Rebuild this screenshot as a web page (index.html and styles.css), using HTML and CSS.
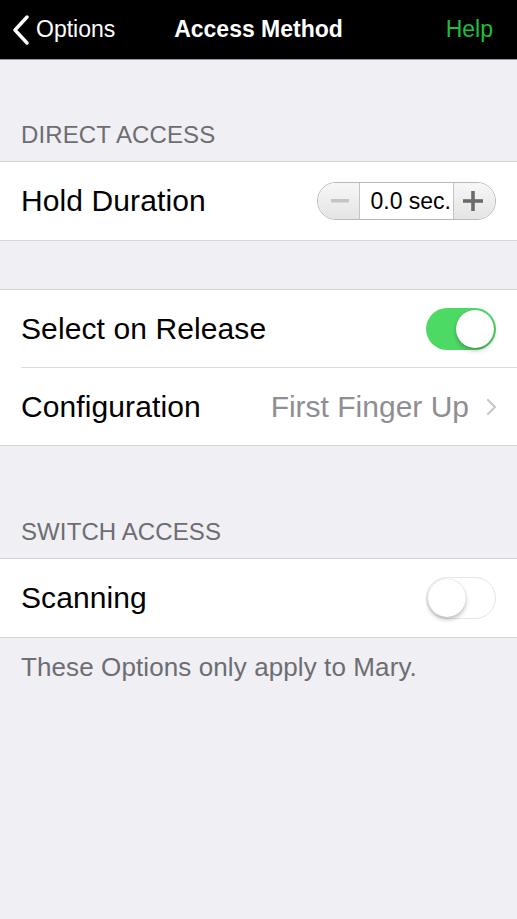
FILE: index.html
```html
<!DOCTYPE html>
<html>
<head>
<meta charset="utf-8">
<title>Access Method</title>
<link rel="stylesheet" href="styles.css">
</head>
<body>
<div class="screen">
  <header class="navbar">
    <div class="nav-left">
      <svg class="back-chevron" width="18" height="30" viewBox="0 0 18 30"><path d="M15 2 L3 15 L15 28" fill="none" stroke="#fff" stroke-width="3.4" stroke-linecap="round" stroke-linejoin="round"/></svg>
      <span class="nav-back">Options</span>
    </div>
    <div class="nav-title">Access Method</div>
    <div class="nav-right">Help</div>
  </header>

  <div class="section-header first">DIRECT ACCESS</div>
  <div class="group">
    <div class="row">
      <span class="row-label">Hold Duration</span>
      <div class="stepper">
        <div class="step-btn minus"><svg width="18" height="4" viewBox="0 0 18 4"><rect x="0" y="0" width="18" height="3.5" fill="#c4c4c4"/></svg></div>
        <div class="step-value">0.0 sec.</div>
        <div class="step-btn plus"><svg width="20" height="20" viewBox="0 0 20 20"><rect x="0" y="8.2" width="20" height="3.6" fill="#6b6b6b"/><rect x="8.2" y="0" width="3.6" height="20" fill="#6b6b6b"/></svg></div>
      </div>
    </div>
  </div>

  <div class="spacer"></div>
  <div class="group">
    <div class="row">
      <span class="row-label">Select on Release</span>
      <div class="switch on"><div class="knob"></div></div>
    </div>
    <div class="row sep">
      <span class="row-label">Configuration</span>
      <div class="row-detail">
        <span class="row-value">First Finger Up</span>
        <svg class="disclosure" width="11" height="18" viewBox="0 0 11 18"><path d="M2 2 L9 9 L2 16" fill="none" stroke="#c7c7cc" stroke-width="2.2" stroke-linecap="round" stroke-linejoin="round"/></svg>
      </div>
    </div>
  </div>

  <div class="section-header second">SWITCH ACCESS</div>
  <div class="group">
    <div class="row">
      <span class="row-label">Scanning</span>
      <div class="switch off"><div class="knob"></div></div>
    </div>
  </div>
  <div class="footer-note">These Options only apply to Mary.</div>
</div>
</body>
</html>
```

FILE: styles.css
```css
html, body {
  margin: 0;
  padding: 0;
  background: #efeff4;
}
body {
  font-family: "Liberation Sans", Arial, sans-serif;
  color: #000;
}
.screen {
  width: 517px;
  height: 919px;
  background: #efeff4;
  overflow: hidden;
}
.navbar {
  height: 59px;
  background: #000;
  border-bottom: 1px solid #9b9b9f;
  display: flex;
  align-items: center;
  justify-content: space-between;
  position: relative;
  padding: 0 24px 0 12px;
}
.nav-left {
  display: flex;
  align-items: center;
  gap: 6px;
  color: #fff;
  font-size: 23px;
}
.back-chevron {
  display: block;
}
.nav-back {
  color: #fff;
}
.nav-title {
  position: absolute;
  left: 0;
  right: 0;
  text-align: center;
  color: #fff;
  font-size: 23px;
  font-weight: bold;
  pointer-events: none;
}
.nav-right {
  color: #1fbf3c;
  font-size: 23px;
}
.section-header {
  color: #6d6d72;
  font-size: 24px;
  line-height: 28px;
  letter-spacing: 0.1px;
  padding: 0 21px 12px;
}
.section-header.first {
  padding-top: 61px;
}
.section-header.second {
  padding-top: 72px;
}
.group {
  background: #fff;
  border-top: 1px solid #d6d6da;
  border-bottom: 1px solid #d6d6da;
}
.row {
  height: 78px;
  display: flex;
  align-items: center;
  justify-content: space-between;
  padding: 0 21px;
  position: relative;
}
.group .row.sep {
  height: 77px;
}
.row.sep::before {
  content: "";
  position: absolute;
  left: 21px;
  right: 0;
  top: -1px;
  height: 1px;
  background: #dcdce0;
}
.row-label {
  font-size: 30px;
  letter-spacing: 0.1px;
}
.spacer {
  height: 48px;
}
.stepper {
  display: flex;
  height: 36px;
  border: 1px solid #b9b9bc;
  border-radius: 19px;
  overflow: hidden;
}
.step-btn {
  width: 41px;
  box-sizing: border-box;
  display: flex;
  align-items: center;
  justify-content: center;
  background: linear-gradient(#f7f7f7, #e4e4e4);
}
.step-btn.minus {
  padding-left: 3px;
}
.step-btn.plus {
  padding-right: 3px;
}
.step-value {
  width: 95px;
  background: #fff;
  border-left: 1px solid #c4c4c6;
  border-right: 1px solid #c4c4c6;
  display: flex;
  align-items: center;
  justify-content: flex-end;
  padding-right: 2px;
  font-size: 23px;
  box-sizing: border-box;
}
.switch {
  width: 70px;
  height: 42px;
  border-radius: 21px;
  box-sizing: border-box;
  display: flex;
  align-items: center;
  padding: 2px;
}
.switch.on {
  background: #4cd964;
  justify-content: flex-end;
}
.switch.off {
  background: #fff;
  border: 1.5px solid #e5e5ea;
  justify-content: flex-start;
  padding: 1px;
}
.knob {
  width: 38px;
  height: 38px;
  border-radius: 50%;
  background: #fff;
  box-shadow: 0 3px 4px rgba(0,0,0,0.22), 0 0 1px rgba(0,0,0,0.25);
}
.row-detail {
  display: flex;
  align-items: center;
  gap: 17px;
}
.row-value {
  font-size: 30px;
  color: #8e8e93;
}
.disclosure {
  display: block;
  margin-right: -1px;
}
.footer-note {
  color: #6d6d72;
  font-size: 26px;
  line-height: 30px;
  letter-spacing: 0.1px;
  padding: 14px 21px 0;
}
```
